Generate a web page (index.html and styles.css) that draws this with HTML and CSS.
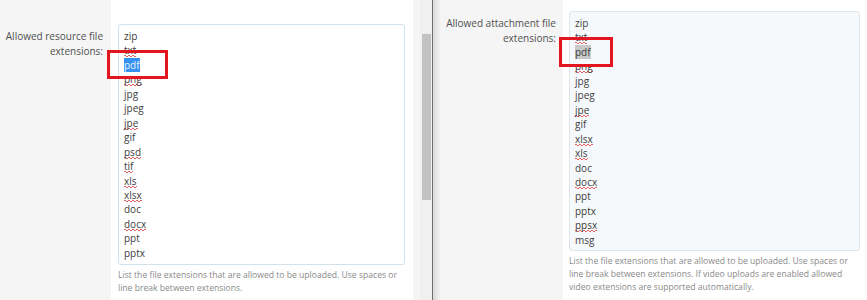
FILE: index.html
```html
<!DOCTYPE html>
<html lang="en">
<head>
    <meta charset="UTF-8">
    <meta name="viewport" content="width=device-width, initial-scale=1.0">
    <title>Allowed file extensions</title>
    <link rel="stylesheet" href="styles.css">
</head>
<body>
    <div class="screen">
        <div class="pane pane-left">
            <div class="form form-resource">
                <div class="row row-tail">
                    <div class="row-label"></div>
                    <div class="row-input">
                        <p class="hint">values.</p>
                    </div>
                </div>
                <div class="row">
                    <label class="row-label">Allowed resource file<br>extensions:</label>
                    <div class="row-input">
                        <div class="ext-list">
                            <div>zip</div>
                            <div><span class="typo">txt</span></div>
                            <div><span class="sel-active">pdf</span></div>
                            <div><span class="typo">png</span></div>
                            <div>jpg</div>
                            <div>jpeg</div>
                            <div><span class="typo">jpe</span></div>
                            <div>gif</div>
                            <div><span class="typo">psd</span></div>
                            <div><span class="typo">tif</span></div>
                            <div><span class="typo">xls</span></div>
                            <div><span class="typo">xlsx</span></div>
                            <div>doc</div>
                            <div><span class="typo">docx</span></div>
                            <div>ppt</div>
                            <div>pptx</div>
                        </div>
                        <p class="hint">List the file extensions that are allowed to be uploaded. Use spaces or line break between extensions.</p>
                    </div>
                </div>
            </div>
            <div class="scrollbar"><div class="thumb"></div></div>
            <div class="mark mark-left"></div>
        </div>

        <div class="divider"></div>

        <div class="pane pane-right">
            <div class="form form-attach">
                <div class="row">
                    <label class="row-label">Allowed attachment file<br>extensions:</label>
                    <div class="row-input">
                        <div class="ext-list ext-list-fixed">
                            <div>zip</div>
                            <div><span class="typo">txt</span></div>
                            <div><span class="sel-inactive">pdf</span></div>
                            <div><span class="typo">png</span></div>
                            <div>jpg</div>
                            <div>jpeg</div>
                            <div><span class="typo">jpe</span></div>
                            <div>gif</div>
                            <div><span class="typo">xlsx</span></div>
                            <div><span class="typo">xls</span></div>
                            <div>doc</div>
                            <div><span class="typo">docx</span></div>
                            <div>ppt</div>
                            <div>pptx</div>
                            <div><span class="typo">ppsx</span></div>
                            <div>msg</div>
                        </div>
                        <p class="hint">List the file extensions that are allowed to be uploaded. Use spaces or line break between extensions. If video uploads are enabled allowed video extensions are supported automatically.</p>
                    </div>
                </div>
            </div>
            <div class="mark mark-right"></div>
        </div>
    </div>
</body>
</html>
```

FILE: styles.css
```css
body {
    margin: 0;
    font-family: "Open Sans", "Noto Sans", sans-serif;
    color: #444;
    background-color: #f5f5f5;
}

.screen {
    display: flex;
    height: 300px;
    overflow: hidden;
}

.pane {
    position: relative;
    display: flex;
}

.pane-left {
    width: 432px;
}

.pane-right {
    width: 434px;
}

.form-resource {
    width: 420px;
    background: linear-gradient(to right, #f5f5f5 111px, #fff 111px, #fff 413px, #f5f5f5 413px);
}

.form-attach {
    width: 434px;
    background: linear-gradient(to right, #dadada 0, #f5f5f5 8px, #f5f5f5 130px, #fff 130px);
}

.row {
    display: grid;
    grid-template-columns: 111px 302px;
    padding: 10px 0;
}

.form-attach .row {
    grid-template-columns: 130px 304px;
    padding-top: 11px;
}

.row-tail {
    margin-top: -19px;
}

.row-tail .hint {
    margin: 0;
}

.row-label {
    padding: 5px 8px 0 0;
    text-align: right;
    font-size: 10px;
    line-height: 14.5px;
    color: #505050;
}

.form-attach .row-label {
    padding-right: 7px;
}

.row-input {
    padding: 0 8px 0 7px;
}

.form-attach .row-input {
    padding: 0 7px 0 6px;
}

.ext-list {
    padding: 4px 5px;
    border: 1px solid #d3e2ea;
    border-radius: 3px;
    background: #fff;
    font-size: 10px;
    line-height: 14.45px;
    color: #3d3d3d;
}

.ext-list-fixed {
    height: 240px;
    box-sizing: border-box;
    overflow: hidden;
    border-color: #dfe5e9;
    background: #f6f9fb;
}

/* spell-check squiggle */
.typo {
    background-image:
        linear-gradient(45deg, transparent 38%, #e06262 38%, #e06262 62%, transparent 62%),
        linear-gradient(-45deg, transparent 38%, #e06262 38%, #e06262 62%, transparent 62%);
    background-size: 4px 2px;
    background-position: 0 100%, 2px 100%;
    background-repeat: repeat-x;
}

.sel-active {
    background: #3592f2;
    color: #eaf3ff;
}

.sel-inactive {
    background: #c8c8c8;
}

.hint {
    margin: 4px 0 0;
    font-size: 8.6px;
    line-height: 13px;
    color: #8a8a8a;
}

.scrollbar {
    width: 12px;
    padding-top: 34px;
    background: #f0f0f0;
}

.thumb {
    width: 9px;
    height: 166px;
    margin-left: 2px;
    background: #c2c2c2;
}

.divider {
    width: 1px;
    background: #6e6e6e;
}

.mark {
    position: absolute;
    border: 3px solid #e3161f;
}

.mark-left {
    left: 107px;
    top: 50px;
    width: 55px;
    height: 23px;
}

.mark-right {
    left: 126px;
    top: 37px;
    width: 48px;
    height: 24px;
}
```
